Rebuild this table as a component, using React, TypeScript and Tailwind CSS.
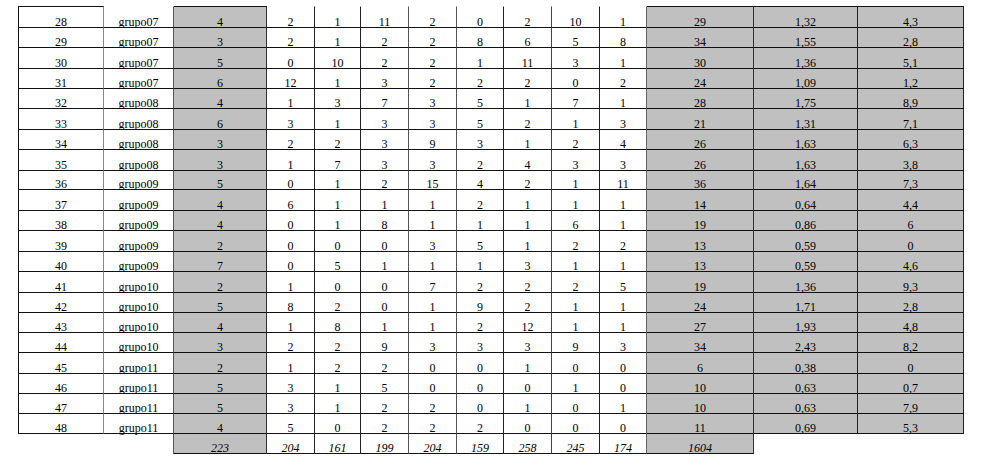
import React from "react";

type Row = [string, string, string, string[], string, string, string];

const rows: Row[] = [
  ["28", "grupo07", "4", ["2", "1", "11", "2", "0", "2", "10", "1"], "29", "1,32", "4,3"],
  ["29", "grupo07", "3", ["2", "1", "2", "2", "8", "6", "5", "8"], "34", "1,55", "2,8"],
  ["30", "grupo07", "5", ["0", "10", "2", "2", "1", "11", "3", "1"], "30", "1,36", "5,1"],
  ["31", "grupo07", "6", ["12", "1", "3", "2", "2", "2", "0", "2"], "24", "1,09", "1,2"],
  ["32", "grupo08", "4", ["1", "3", "7", "3", "5", "1", "7", "1"], "28", "1,75", "8,9"],
  ["33", "grupo08", "6", ["3", "1", "3", "3", "5", "2", "1", "3"], "21", "1,31", "7,1"],
  ["34", "grupo08", "3", ["2", "2", "3", "9", "3", "1", "2", "4"], "26", "1,63", "6,3"],
  ["35", "grupo08", "3", ["1", "7", "3", "3", "2", "4", "3", "3"], "26", "1,63", "3,8"],
  ["36", "grupo09", "5", ["0", "1", "2", "15", "4", "2", "1", "11"], "36", "1,64", "7,3"],
  ["37", "grupo09", "4", ["6", "1", "1", "1", "2", "1", "1", "1"], "14", "0,64", "4,4"],
  ["38", "grupo09", "4", ["0", "1", "8", "1", "1", "1", "6", "1"], "19", "0,86", "6"],
  ["39", "grupo09", "2", ["0", "0", "0", "3", "5", "1", "2", "2"], "13", "0,59", "0"],
  ["40", "grupo09", "7", ["0", "5", "1", "1", "1", "3", "1", "1"], "13", "0,59", "4,6"],
  ["41", "grupo10", "2", ["1", "0", "0", "7", "2", "2", "2", "5"], "19", "1,36", "9,3"],
  ["42", "grupo10", "5", ["8", "2", "0", "1", "9", "2", "1", "1"], "24", "1,71", "2,8"],
  ["43", "grupo10", "4", ["1", "8", "1", "1", "2", "12", "1", "1"], "27", "1,93", "4,8"],
  ["44", "grupo10", "3", ["2", "2", "9", "3", "3", "3", "9", "3"], "34", "2,43", "8,2"],
  ["45", "grupo11", "2", ["1", "2", "2", "0", "0", "1", "0", "0"], "6", "0,38", "0"],
  ["46", "grupo11", "5", ["3", "1", "5", "0", "0", "0", "1", "0"], "10", "0,63", "0,7"],
  ["47", "grupo11", "5", ["3", "1", "2", "2", "0", "1", "0", "1"], "10", "0,63", "7,9"],
  ["48", "grupo11", "4", ["5", "0", "2", "2", "2", "0", "0", "0"], "11", "0,69", "5,3"],
];

const totals = ["223", "204", "161", "199", "204", "159", "258", "245", "174", "1604"];

// right border colour per column
const vColor = [
  "border-r-[#8a8a8a]",
  "border-r-[#555]",
  "border-r-[#333]",
  "border-r-[#222]",
  "border-r-[#222]",
  "border-r-[#555]",
  "border-r-[#555]",
  "border-r-[#222]",
  "border-r-[#444]",
  "border-r-[#222]",
  "border-r-[#666]",
  "border-r-[#333]",
  "border-r-[#222]",
  "border-r-[#222]",
];

const greyCols = new Set([2, 11, 12, 13]);
const topCols = new Set([0, 2, 11, 12, 13]);

function Cell({
  text,
  col,
  first,
  italic,
}: {
  text: string;
  col: number;
  first: boolean;
  italic?: boolean;
}) {
  const cls = [
    "flex items-end justify-center border-r border-b border-b-[#111]",
    vColor[col],
    greyCols.has(col) ? "bg-[#c0c0c0]" : "bg-white",
    col === 0 ? "border-l border-l-[#111]" : "",
    first ? (topCols.has(col) ? "border-t border-t-[#111]" : "border-t border-t-transparent") : "",
  ].join(" ");
  return (
    <div className={cls}>
      <span
        className={
          "font-['Liberation_Serif','Times_New_Roman',serif] leading-[12px] mb-[-1px] text-[12px] text-black " +
          (italic ? "italic" : "")
        }
      >
        {text}
      </span>
    </div>
  );
}

export default function App() {
  return (
    <div className="w-[985px] h-[466px] bg-white pt-[6px] pl-[18px] font-['Liberation_Serif','Times_New_Roman',serif]">
      <div className="grid w-max grid-cols-[86px_70px_93px_48px_46px_48px_48px_47px_48px_48px_47px_107px_104px_106px] grid-rows-[22px_20px_21px_20px_20px_21px_20px_21px_19px_21px_20px_21px_20px_21px_20px_20px_20px_21px_20px_20px_20px_20px]">
        {rows.map((r, ri) => {
          const vals = [r[0], r[1], r[2], ...r[3], r[4], r[5], r[6]];
          return vals.map((v, ci) => <Cell key={ri + "-" + ci} text={v} col={ci} first={ri === 0} />);
        })}
        <div />
        <div className="border-r border-r-[#555]" />
        <Cell text={totals[0]} col={2} first={false} italic />
        {totals.slice(1, 9).map((t, i) => (
          <Cell key={"t" + i} text={t} col={3 + i} first={false} italic />
        ))}
        <Cell text={totals[9]} col={11} first={false} italic />
        <div />
        <div />
      </div>
    </div>
  );
}
